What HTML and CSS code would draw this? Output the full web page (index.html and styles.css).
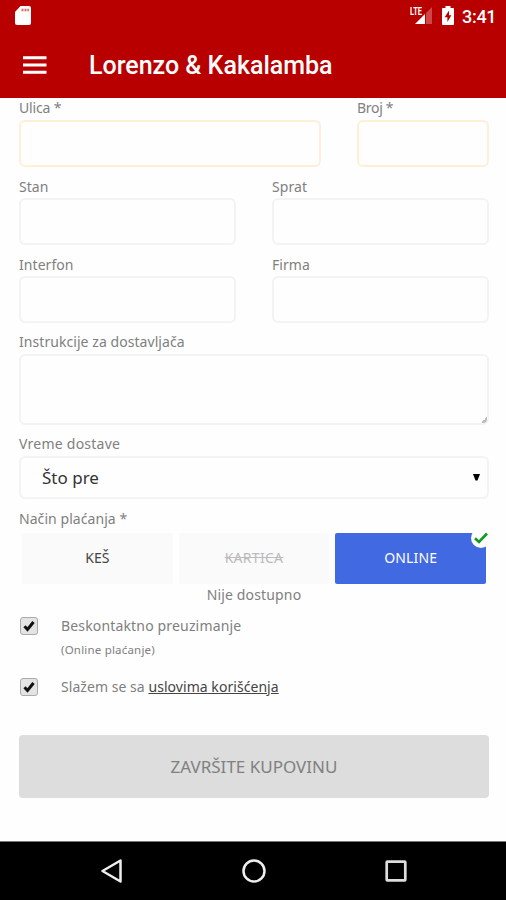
FILE: index.html
```
<!DOCTYPE html>
<html lang="sr-Latn">
<head>
<meta charset="utf-8">
<meta name="viewport" content="width=device-width">
<title>Lorenzo &amp; Kakalamba</title>
<link rel="stylesheet" href="styles.css">
</head>
<body>
<header class="top">
  <div class="status">
    <svg class="sd" width="16" height="19" viewBox="0 0 16 19"><path fill="#fff" d="M5.500 0H14a2 2 0 0 1 2 2v15a2 2 0 0 1-2 2H2a2 2 0 0 1-2-2V6z"/><path stroke="#d66" stroke-width="2.400" d="M6.500 4h2M9.500 4h2M12.300 4h1.600"/></svg>
    <div class="indicators">
      <svg width="24" height="20" viewBox="0 0 24 20"><path fill="#fff" d="M5 18 15 8v10z"/><path fill="#d04545" d="M16 7l6-6v17h-6z"/><text class="lte" x="0" y="8.500" textLength="12" lengthAdjust="spacingAndGlyphs">LTE</text></svg>
      <svg class="battery" width="12" height="19" viewBox="0 0 12 19"><path fill="#fff" d="M3.500 0h5v2H11a1 1 0 0 1 1 1v15a1 1 0 0 1-1 1H1a1 1 0 0 1-1-1V3a1 1 0 0 1 1-1h2.500z"/><path fill="#b80000" d="M7 4.500 2.700 11.300h2.700V16l4-6.700H7z"/></svg>
      <span class="clock">3:41</span>
    </div>
  </div>
  <div class="bar">
    <svg width="24" height="18" viewBox="0 0 24 18"><path stroke="#fff" stroke-width="3" d="M0 1.700h23.500M0 9h23.500M0 16.200h23.500"/></svg>
    <h1 class="title">Lorenzo &amp; Kakalamba</h1>
  </div>
</header>
<main class="form">
  <div class="row street">
    <label class="field"><span class="label ulica">Ulica *</span><input class="box required" type="text"></label>
    <label class="field"><span class="label broj">Broj *</span><input class="box required" type="text"></label>
  </div>
  <div class="row">
    <label class="field"><span class="label">Stan</span><input class="box" type="text"></label>
    <label class="field"><span class="label">Sprat</span><input class="box" type="text"></label>
  </div>
  <div class="row">
    <label class="field"><span class="label">Interfon</span><input class="box" type="text"></label>
    <label class="field"><span class="label">Firma</span><input class="box" type="text"></label>
  </div>
  <label class="field note"><span class="label">Instrukcije za dostavljača</span><textarea class="box area"></textarea></label>
  <div class="field time"><span class="label">Vreme dostave</span>
    <div class="box select"><span>Što pre</span><svg width="7" height="7" viewBox="0 0 7 7"><path d="M0 0h7L4.500 6.500h-2z"/></svg></div>
  </div>
  <div class="field payment"><span class="label">Način plaćanja *</span>
    <div class="options">
      <div class="option"><span>KEŠ</span></div>
      <div class="option off"><span>KARTICA</span></div>
      <div class="option on"><span>ONLINE</span><i class="badge"><svg width="14" height="12" viewBox="0 0 14 12"><path fill="none" stroke="#129b22" stroke-width="2.600" d="M1 6.200 5 10l8-8.500"/></svg></i></div>
    </div>
    <p class="hint"><span>Nije dostupno</span></p>
  </div>
  <div class="check first">
    <span class="tick"><svg width="12" height="12" viewBox="0 0 12 12"><path fill="none" stroke="#111" stroke-width="3" d="M1.500 6.200 4.500 9.500 10.500 2"/></svg></span>
    <div><p class="text contact">Beskontaktno preuzimanje</p><p class="small">(Online plaćanje)</p></div>
  </div>
  <div class="check">
    <span class="tick"><svg width="12" height="12" viewBox="0 0 12 12"><path fill="none" stroke="#111" stroke-width="3" d="M1.500 6.200 4.500 9.500 10.500 2"/></svg></span>
    <p class="text">Slažem se sa <a class="terms">uslovima korišćenja</a></p>
  </div>
  <button class="submit" type="button">ZAVRŠITE KUPOVINU</button>
</main>
<nav class="nav">
  <svg width="24" height="26" viewBox="0 0 24 26"><path fill="none" stroke="#eee" stroke-width="2.500" stroke-linejoin="round" d="M2.500 13 20.500 2.500v21z"/></svg>
  <svg width="24" height="26" viewBox="0 0 24 26"><circle cx="12" cy="13" r="10.500" fill="none" stroke="#eee" stroke-width="2.500"/></svg>
  <svg width="24" height="26" viewBox="0 0 24 26"><rect x="2.700" y="3.700" width="18.600" height="18.600" rx=".5" fill="none" stroke="#ddd" stroke-width="2.700"/></svg>
</nav>
</body>
</html>
```
FILE: styles.css
```
* { box-sizing: border-box; }
body {
  margin: 0;
  height: 900px;
  display: flex;
  flex-direction: column;
  overflow: hidden;
  background: #fefefe;
  color: #808080;
  font-family: "Noto Sans", "Open Sans", sans-serif;
  font-size: 14px;
}
p, h1 { margin: 0; }
svg { display: block; flex: none; }
.top { height: 98px; flex: none; background: #b80000; color: #fff; font-family: Roboto, sans-serif; }
.status { height: 32px; padding: 6px 11px 0 15px; display: flex; justify-content: space-between; align-items: flex-start; }
.indicators { display: flex; align-items: flex-start; }
.lte { font: 700 10px Roboto, sans-serif; fill: #fff; }
.battery { margin-left: 8px; }
.clock { margin-left: 8px; font-size: 18px; font-weight: 500; line-height: 21px; width: 33px; white-space: nowrap; letter-spacing: -0.3px; }
.bar { height: 66px; padding-left: 23px; display: flex; align-items: center; gap: 42px; }
.title { padding-top: 2px; font-size: 25px; font-weight: 500; line-height: 30px; white-space: nowrap; }
.form { padding: 0 17px 0 19px; height: 743px; flex: none; display: flex; flex-direction: column; }
.row { display: grid; grid-template-columns: 217px 217px; justify-content: space-between; height: 68px; margin-bottom: 9.500px; }
.street { grid-template-columns: 302px 132px; height: 69px; margin-bottom: 10px; }
.field { display: flex; flex-direction: column; min-width: 0; justify-content: space-between; }
.label { line-height: 20px; white-space: nowrap; letter-spacing: 0.06px; }
.ulica { letter-spacing: -0.15px; }
.broj { letter-spacing: -0.3px; }
.box { width: 100%; height: 47px; margin: 0; border: 2px solid #f3f3f3; border-radius: 6px; background: #fefefe; outline: 0; }
.required { border-color: #feefd6; }
.note { height: 93px; }
.area { height: 71px; resize: none; background: linear-gradient(135deg, transparent 50%, #bbb 50%) right 0 bottom 0 / 6px 6px no-repeat #fefefe; }
.time { height: 65px; margin-top: 9px; }
.time .label { letter-spacing: 0.25px; }
.select { height: 43px; padding: 0 7px 0 21px; display: flex; align-items: center; justify-content: space-between; color: #333; font-size: 17px; }
.payment { margin-top: 10px; height: 94px; justify-content: flex-start; }
.options { display: flex; gap: 6px; padding: 0 3px; margin-top: 4px; }
.option { position: relative; flex: 1; height: 51px; padding-bottom: 2px; display: flex; align-items: center; justify-content: center; background: #fafafa; color: #444; border-radius: 2px; }
.off { color: #bbb; text-decoration: line-through; letter-spacing: 0.3px; }
.on { background: #4169e1; color: #fff; letter-spacing: 0.15px; }
.badge { position: absolute; right: -5px; top: -5px; width: 20px; height: 20px; border-radius: 50%; background: #fefefe; display: flex; align-items: center; justify-content: center; }
.hint { text-align: center; line-height: 21px; letter-spacing: 0.15px; }
.check { display: flex; gap: 24px; }
.first { height: 61px; margin-top: 12px; }
.tick { width: 18px; height: 18px; margin: 2px -1px 0 1px; border: 1px solid #aaa; border-radius: 3px; background: #e4e4e4; display: flex; align-items: center; justify-content: center; flex: none; }
.text { line-height: 21px; white-space: nowrap; letter-spacing: 0.05px; }
.contact { letter-spacing: 0.16px; }
.small { font-size: 11.500px; line-height: 18px; margin-top: 5px; letter-spacing: 0.2px; }
.terms { color: #444; text-decoration: underline; }
.submit { height: 63px; width: 100%; margin-top: 38px; border: 0; border-radius: 4px; background: #ddd; color: #808080; font: 17px "Noto Sans", sans-serif; }
.nav { height: 59px; flex: none; background: #000; border-top: 1px solid #777; padding-left: 2px; display: grid; grid-template-columns: 24px 24px 24px; column-gap: 118px; justify-content: center; align-items: center; }
```
